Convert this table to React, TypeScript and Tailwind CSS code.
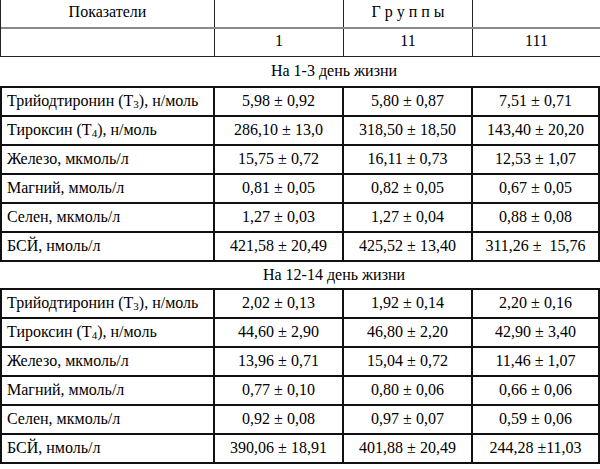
import React from "react";

type Row = { label: React.ReactNode; v: [string, string, string] };

const T3 = (
  <>
    Трийодтиронин (Т<sub className="text-[11px]">3</sub>), н/моль
  </>
);
const T4 = (
  <>
    Тироксин (Т<sub className="text-[11px]">4</sub>), н/моль
  </>
);

const part1: Row[] = [
  { label: T3, v: ["5,98 ± 0,92", "5,80 ± 0,87", "7,51 ± 0,71"] },
  { label: T4, v: ["286,10 ± 13,0", "318,50 ± 18,50", "143,40 ± 20,20"] },
  { label: "Железо, мкмоль/л", v: ["15,75 ± 0,72", "16,11 ± 0,73", "12,53 ± 1,07"] },
  { label: "Магний, ммоль/л", v: ["0,81 ± 0,05", "0,82 ± 0,05", "0,67 ± 0,05"] },
  { label: "Селен, мкмоль/л", v: ["1,27 ± 0,03", "1,27 ± 0,04", "0,88 ± 0,08"] },
  { label: "БСЙ, нмоль/л", v: ["421,58 ± 20,49", "425,52 ± 13,40", "311,26 ±  15,76"] },
];

const part2: Row[] = [
  { label: T3, v: ["2,02 ± 0,13", "1,92 ± 0,14", "2,20 ± 0,16"] },
  { label: T4, v: ["44,60 ± 2,90", "46,80 ± 2,20", "42,90 ± 3,40"] },
  { label: "Железо, мкмоль/л", v: ["13,96 ± 0,71", "15,04 ± 0,72", "11,46 ± 1,07"] },
  { label: "Магний, ммоль/л", v: ["0,77 ± 0,10", "0,80 ± 0,06", "0,66 ± 0,06"] },
  { label: "Селен, мкмоль/л", v: ["0,92 ± 0,08", "0,97 ± 0,07", "0,59 ± 0,06"] },
  { label: "БСЙ, нмоль/л", v: ["390,06 ± 18,91", "401,88 ± 20,49", "244,28 ±11,03"] },
];

function Block({ rows }: { rows: Row[] }) {
  return (
    <div className="border-2 border-[#111] w-[600px]">
      {rows.map((r, i) => (
        <div
          key={i}
          className={
            "grid grid-cols-[211px_129px_129px_1fr] h-[27px] box-content " +
            (i > 0 ? "border-t-2 border-[#111]" : "")
          }
        >
          <div className="flex items-center pl-[5px] pb-[1px] whitespace-nowrap">{r.label}</div>
          {r.v.map((v, j) => (
            <div
              key={j}
              className="flex items-center justify-center border-l-2 border-[#111] pb-[1px] whitespace-pre"
            >
              {v}
            </div>
          ))}
        </div>
      ))}
    </div>
  );
}

export default function App() {
  return (
    <div className="w-[600px] h-[469px] bg-white text-black text-[16px] leading-none overflow-hidden font-['Liberation_Serif','Times_New_Roman',serif]">
      <div className="border-l border-[#222]">
        <div className="grid grid-cols-[213px_129px_129px_1fr] h-[29px] border-b-2 border-[#8a8a8a]">
          <div className="flex items-center justify-center pb-[4px]">Показатели</div>
          <div className="border-l border-[#222]" />
          <div className="flex items-center justify-center border-l border-[#222] pb-[4px]">
            Г р у п п ы
          </div>
          <div className="border-l border-[#222]" />
        </div>
        <div className="grid grid-cols-[213px_129px_129px_1fr] h-[28px] border-b border-[#222]">
          <div />
          <div className="flex items-center justify-center border-l border-[#222] pb-[3px]">1</div>
          <div className="flex items-center justify-center border-l border-[#222] pb-[3px]">11</div>
          <div className="flex items-center justify-center border-l border-[#222] pb-[3px]">111</div>
        </div>
      </div>
      <div className="h-[29px] flex items-center justify-center pl-[68px] pb-[2px]">
        На 1-3 день жизни
      </div>
      <Block rows={part1} />
      <div className="h-[26px] flex items-center justify-center pl-[68px] pb-[1px]">
        На 12-14 день жизни
      </div>
      <Block rows={part2} />
    </div>
  );
}
